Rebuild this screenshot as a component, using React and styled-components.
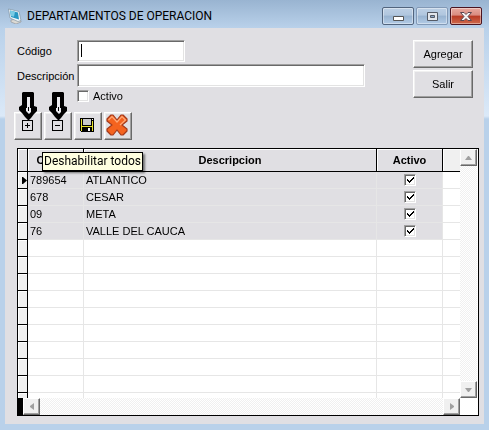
import React, { useState } from 'react';
import styled, { createGlobalStyle, css } from 'styled-components';

const GlobalStyle = createGlobalStyle`
  * { box-sizing: border-box; }
  html, body { margin: 0; }
  body { font-family: "Liberation Sans", Arial, sans-serif; font-size: 11px; color: #000; }
  button, input { font: inherit; color: inherit; margin: 0; }
`;

const face = '#e0dfe3';

const raised = css`
  border: 1px solid;
  border-color: #fff #696969 #696969 #fff;
  box-shadow: inset -1px -1px #a0a0a0, inset 1px 1px #f0f0f0;
`;

const sunken = css`
  border: 1px solid;
  border-color: #a0a0a0 #fff #fff #a0a0a0;
  box-shadow: inset 1px 1px #696969, inset -1px -1px #e3e3e3;
`;

const Window = styled.div`
  display: flex;
  flex-direction: column;
  min-height: 100vh;
  padding: 0 5px 6px;
  background: linear-gradient(#99b4d1, #b9d1ea 28px, #dbe9f8 116px, #b9d1ea 119px);
`;

const TitleBar = styled.header`
  display: flex;
  align-items: center;
  gap: 5px;
  height: 28px;
  padding: 4px 2px 0 3px;
`;

const Title = styled.h1`
  flex: 1;
  margin: 0;
  font: 12px Roboto, "Open Sans", sans-serif;
`;

const Controls = styled.div`
  display: flex;
  gap: 2px;
`;

const Control = styled.button`
  display: grid;
  place-items: center;
  width: 32px;
  height: 18px;
  padding: 0;
  border: 1px solid ${(p) => (p.$close ? '#4b1420' : p.$dim ? '#8299b6' : '#52657e')};
  border-radius: 2px;
  background: ${(p) =>
    p.$close
      ? 'linear-gradient(#e8a99f, #d98c80 45%, #b83a24 50%, #cf6a4d)'
      : 'linear-gradient(#bdd0e5, #b0c6de 45%, #98b3d0 50%, #b2cbe6)'};
  box-shadow: inset 0 0 0 1px rgba(255, 255, 255, 0.4);
`;

const Client = styled.main`
  flex: 1;
  display: flex;
  flex-direction: column;
  padding: 12px 5px 8px 12px;
  background: ${face};
`;

const Top = styled.div`
  display: flex;
  justify-content: space-between;
  padding-right: 6px;
`;

const Form = styled.form`
  display: grid;
  grid-template-columns: 60px 1fr;
  row-gap: 2px;
  align-items: center;
  width: 348px;
`;

const TextBox = styled.input`
  ${sunken}
  width: ${(p) => p.$width};
  height: ${(p) => p.$height};
  padding: 0 3px;
  background: #fff;
  caret-color: transparent;
  outline: none;
  &:focus:placeholder-shown {
    background: linear-gradient(#000, #000) 3px 3px / 1px 13px no-repeat #fff;
  }
  &:focus:not(:placeholder-shown) {
    caret-color: #000;
  }
`;

const CheckLabel = styled.label`
  grid-column: 2;
  display: flex;
  align-items: center;
  gap: 4px;
  height: 13px;
`;

const Check = styled.input`
  ${sunken}
  appearance: none;
  display: block;
  width: 12px;
  height: 12px;
  background: #fff;
  &:checked {
    background: #fff url("data:image/svg+xml,%3Csvg xmlns='http://www.w3.org/2000/svg' viewBox='0 0 10 10' shape-rendering='crispEdges'%3E%3Cpath d='M2 4h1v1h1v1h1V5h1V4h1V3h1V2h1v2H8v1H7v1H6v1H5v1H4V7H3V6H2z'/%3E%3C/svg%3E") center / 10px 10px no-repeat;
  }
`;

const Actions = styled.div`
  display: flex;
  flex-direction: column;
  gap: 2px;
`;

const Button = styled.button`
  ${raised}
  width: 60px;
  height: 28px;
  padding: 0;
  background: ${face};
`;

const Toolbar = styled.div`
  display: flex;
  gap: 2px;
  margin: 10px 0 8px -3px;
`;

const ToolButton = styled.button`
  ${raised}
  position: relative;
  display: grid;
  place-items: center;
  width: 28px;
  height: 28px;
  padding: 0 2px 2px 0;
  background: ${face};
`;

const Arrow = styled.svg`
  position: absolute;
  left: 4px;
  bottom: 19px;
`;

const Tip = styled.div`
  position: absolute;
  left: -3px;
  top: 39px;
  z-index: 2;
  height: 19px;
  padding: 0 1px;
  border: 1px solid #000;
  background: #ffffe1;
  box-shadow: 2px 2px 2px rgba(0, 0, 0, 0.5);
  font: 12px/17px Roboto, "Open Sans", sans-serif;
  white-space: nowrap;
`;

const Grid = styled.section`
  flex: 1;
  display: grid;
  grid-template-columns: minmax(0, 1fr) 17px;
  grid-template-rows: minmax(249px, 1fr) 17px;
  border: 1px solid #000;
  padding-right: 1px;
  background: #fff;
`;

const Viewport = styled.div`
  height: 0;
  min-height: 100%;
  overflow: hidden;
`;

const Table = styled.table`
  width: 100%;
  table-layout: fixed;
  border-spacing: 0;
`;

const Col = styled.col`
  width: ${(p) => p.$width};
`;

const Head = styled.th`
  height: 23px;
  padding: 0;
  border-right: ${(p) => (p.$last ? 0 : '1px solid #000')};
  border-bottom: 1px solid #000;
  background: ${(p) => (p.$last ? '#f0f0f0' : face)};
  box-shadow: inset 1px 1px #fff;
`;

const Cell = styled.td`
  height: 17px;
  padding: 0 2px;
  border-right: ${(p) => (p.$last ? 0 : '1px solid #e6e6e6')};
  border-bottom: 1px solid #e6e6e6;
  background: ${(p) => (p.$filled ? face : '#fff')};
  line-height: 16px;
  white-space: nowrap;
`;

const Selector = styled.td`
  height: 17px;
  padding: 0;
  border-right: 1px solid #000;
  border-bottom: 1px solid #000;
  background: #f0f0f0;
  box-shadow: inset 1px 1px #fff;
`;

const Center = styled.div`
  display: flex;
  justify-content: center;
`;

const Marker = styled.svg`
  display: block;
  margin-left: auto;
`;

const dither = css`
  background: repeating-conic-gradient(#fff 0 25%, #f0f0f0 0 50%) 0 0 / 2px 2px;
`;

const Scroll = styled.div`
  ${dither}
  display: flex;
  flex-direction: ${(p) => (p.$vertical ? 'column' : 'row')};
  justify-content: space-between;
  border-left: ${(p) => (p.$vertical ? 0 : '5px solid #000')};
`;

const ScrollButton = styled.button`
  ${raised}
  display: grid;
  place-items: center;
  width: 17px;
  height: 17px;
  padding: 0;
  background: #f0f0f0;
`;

const rows = [
  ['789654', 'ATLANTICO'],
  ['678', 'CESAR'],
  ['09', 'META'],
  ['76', 'VALLE DEL CAUCA'],
];
const blanks = Array.from({ length: 10 }, (_, i) => i);

const AppIcon = () => (
  <svg width="14" height="16" viewBox="0 0 14 16">
    <path d="M3 12l7-1 3 2v1l-5 2-5-2z" fill="#dcdad4" stroke="#8b8f94" strokeWidth=".6" />
    <path d="M.5 1l10.500 2.500 2 9-3 1L2 10z" fill="#f2f7fa" stroke="#8094a2" strokeWidth=".7" />
    <path d="M2 2.500l8 2 1 7-8-2.500z" fill="#2596c2" />
    <path d="M2 2.500l5 1.200-1 5L3 8z" fill="#79cbe4" />
  </svg>
);

const DownArrow = () => (
  <Arrow width="19" height="28" viewBox="0 0 19 28" aria-hidden="true">
    <path d="M4 0h10l1 1v13l3 1v4l-3 3-3 4-2 2H9l-3-3-3-4-3-3v-3l3-2V1z" fill="#000" />
    <path d="M8 5h3v11h1v4l-2 2-3-3v-3h1z" fill="#ececf0" />
    <path d="M9 15h1v4H9z" fill="#000" />
  </Arrow>
);

const BoxGlyph = ({ plus }) => (
  <svg width="11" height="11" viewBox="0 0 11 11" shapeRendering="crispEdges">
    <path d="M.5.5h10v10H.5zM3 5.5h5" fill="none" stroke="#000" />
    {plus && <path d="M5.5 3v5" stroke="#000" />}
  </svg>
);

const SaveIcon = () => (
  <svg width="14" height="14" viewBox="0 0 14 14" shapeRendering="crispEdges">
    <path d="M0 0h14v14H1L0 13z" fill="#000" />
    <path d="M1 1h1v12H1zM12 3h1v10h-1zM2 8h10v1H2z" fill="#e8e030" />
    <path d="M3 1h8v6H3z" fill="#c8c8cc" />
    <path d="M12 1h1v1h-1z" fill="#fff" />
    <path d="M8 10h2v3H8z" fill="#fff" />
  </svg>
);

const DeleteIcon = () => (
  <svg width="24" height="24" viewBox="0 0 24 24">
    <path
      d="M6 2h2l4 5 4-5h2l4 4v2l-5 4 5 4v2l-4 4h-2l-4-5-4 5H6l-4-4v-2l5-4-5-4V6z"
      fill="#f4631f"
      stroke="#a33a1c"
      strokeWidth="1.2"
      strokeLinejoin="round"
    />
    <path d="M3.500 7L7 3.500 12 9l5-5.500L20.500 7 15 12" fill="none" stroke="#ffa878" strokeWidth="1.2" />
  </svg>
);

const points = { up: 'M0 4h7L4 0H3z', down: 'M0 0h7L4 4H3z', left: 'M4 0v7L0 4V3z', right: 'M0 0v7l4-3V3z' };

const ScrollArrow = ({ dir, label }) => (
  <ScrollButton type="button" aria-label={label}>
    <svg
      width={dir === 'up' || dir === 'down' ? 7 : 4}
      height={dir === 'up' || dir === 'down' ? 4 : 7}
    >
      <path d={points[dir]} fill="#a0a0a0" />
    </svg>
  </ScrollButton>
);

export default function App() {
  const [active, setActive] = useState(false);
  const [enabled, setEnabled] = useState(rows.map(() => true));
  const toggle = (i) => setEnabled((list) => list.map((v, k) => (k === i ? !v : v)));

  return (
    <>
      <GlobalStyle />
      <Window>
        <TitleBar>
          <AppIcon />
          <Title>DEPARTAMENTOS DE OPERACION</Title>
          <Controls>
            <Control aria-label="Minimizar">
              <svg width="11" height="9"><path d="M.5 4.500h10v4H.5z" fill="#fff" stroke="#555" /></svg>
            </Control>
            <Control $dim aria-label="Maximizar">
              <svg width="11" height="9">
                <path d="M.5.5h10v8H.5z" fill="#e2e6ec" stroke="#555b66" />
                <path d="M3.500 3.500h4v2h-4z" fill="#8ba6c8" stroke="#555b66" />
              </svg>
            </Control>
            <Control $close aria-label="Cerrar">
              <svg width="12" height="9" viewBox="0 0 12 9">
                <path d="M.5.5h3.500L6 2.500 8 .5h3.500L8 4.500l3.500 4H8l-2-2-2 2H.5L4 4.500z" fill="#f4f4f4" stroke="#5d4850" />
              </svg>
            </Control>
          </Controls>
        </TitleBar>
        <Client>
          <Top>
            <Form onSubmit={(e) => e.preventDefault()}>
              <label htmlFor="codigo">Código</label>
              <TextBox id="codigo" $width="108px" $height="22px" placeholder=" " autoFocus />
              <label htmlFor="descripcion">Descripción</label>
              <TextBox id="descripcion" $width="100%" $height="23px" placeholder=" " />
              <CheckLabel>
                <Check type="checkbox" checked={active} onChange={() => setActive(!active)} />
                Activo
              </CheckLabel>
            </Form>
            <Actions>
              <Button type="button">Agregar</Button>
              <Button type="button">Salir</Button>
            </Actions>
          </Top>
          <Toolbar>
            <ToolButton type="button" aria-label="Habilitar todos" onClick={() => setEnabled(rows.map(() => true))}>
              <BoxGlyph plus />
              <DownArrow />
            </ToolButton>
            <ToolButton type="button" aria-describedby="tip" onClick={() => setEnabled(rows.map(() => false))}>
              <BoxGlyph />
              <DownArrow />
              <Tip id="tip" role="tooltip">Deshabilitar todos</Tip>
            </ToolButton>
            <ToolButton type="button" aria-label="Guardar"><SaveIcon /></ToolButton>
            <ToolButton type="button" aria-label="Eliminar"><DeleteIcon /></ToolButton>
          </Toolbar>
          <Grid>
            <Viewport>
              <Table>
                <colgroup>
                  <Col $width="10px" />
                  <Col $width="56px" />
                  <Col />
                  <Col $width="66px" />
                  <Col $width="17px" />
                </colgroup>
                <thead>
                  <tr>
                    <Head />
                    <Head>Codigo</Head>
                    <Head>Descripcion</Head>
                    <Head>Activo</Head>
                    <Head $last />
                  </tr>
                </thead>
                <tbody>
                  {rows.map(([code, name], i) => (
                    <tr key={code}>
                      <Selector>
                        {i === 0 && (
                          <Marker width="5" height="7"><path d="M0 0h1l4 3.500L1 7H0z" /></Marker>
                        )}
                      </Selector>
                      <Cell $filled>{code}</Cell>
                      <Cell $filled>{name}</Cell>
                      <Cell $filled>
                        <Center>
                          <Check type="checkbox" aria-label={name} checked={enabled[i]} onChange={() => toggle(i)} />
                        </Center>
                      </Cell>
                      <Cell $last />
                    </tr>
                  ))}
                  {blanks.map((n) => (
                    <tr key={n}>
                      <Selector />
                      <Cell />
                      <Cell />
                      <Cell />
                      <Cell $last />
                    </tr>
                  ))}
                </tbody>
              </Table>
            </Viewport>
            <Scroll $vertical>
              <ScrollArrow dir="up" label="Subir" />
              <ScrollArrow dir="down" label="Bajar" />
            </Scroll>
            <Scroll>
              <ScrollArrow dir="left" label="Izquierda" />
              <ScrollArrow dir="right" label="Derecha" />
            </Scroll>
          </Grid>
        </Client>
      </Window>
    </>
  );
}
